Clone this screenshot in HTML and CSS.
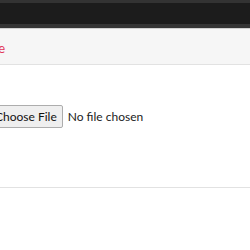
FILE: index.html
```html
<!DOCTYPE html>
<html lang="en">
<head>
    <meta charset="UTF-8">
    <meta name="viewport" content="width=device-width, initial-scale=1.0">
    <title>Upload</title>
    <link rel="stylesheet" href="styles.css">
</head>
<body>

    <header class="topbar"></header>

    <nav class="subbar">
        <a href="#" class="subbar-link">Delete</a>
    </nav>

    <section class="upload">
        <input type="file" id="upload" class="upload-input">
    </section>

    <hr class="divider">

</body>
</html>
```

FILE: styles.css
```css
html, body {
    margin: 0;
    padding: 0;
    overflow: hidden;
}

body {
    font-family: 'Lato', 'Noto Sans', sans-serif;
    font-size: 13px;
    background-color: #fff;
    color: #222;
}

.topbar {
    height: 21px;
    background-color: #1c1c1c;
    border-top: 3px solid #333;
    border-bottom: 4px solid #353535;
    box-shadow: 0 1px 0 #d0d0d0;
}

.subbar {
    margin-top: 1px;
    height: 35px;
    background-color: #f6f6f6;
    border-bottom: 1px solid #e2e2e2;
    display: flex;
    align-items: center;
    margin-left: -33px;
}

.subbar-link {
    color: #e2365a;
    text-decoration: none;
    font-size: 13px;
    padding-top: 2px;
}

.upload {
    padding-top: 40px;
    height: 82px;
    margin-left: -11px;
}

.upload-input {
    font-family: 'Lato', 'Noto Sans', sans-serif;
    font-size: 12px;
    color: #222;
}

.upload-input::file-selector-button {
    font-family: inherit;
    font-size: 12px;
    color: #111;
    height: 23px;
    padding: 0 5px;
    margin-right: 5px;
    background-color: #efefef;
    border: 1px solid #adadad;
    border-radius: 2px;
}

.divider {
    margin: 0;
    border: 0;
    border-top: 1px solid #e2e2e2;
}
```
